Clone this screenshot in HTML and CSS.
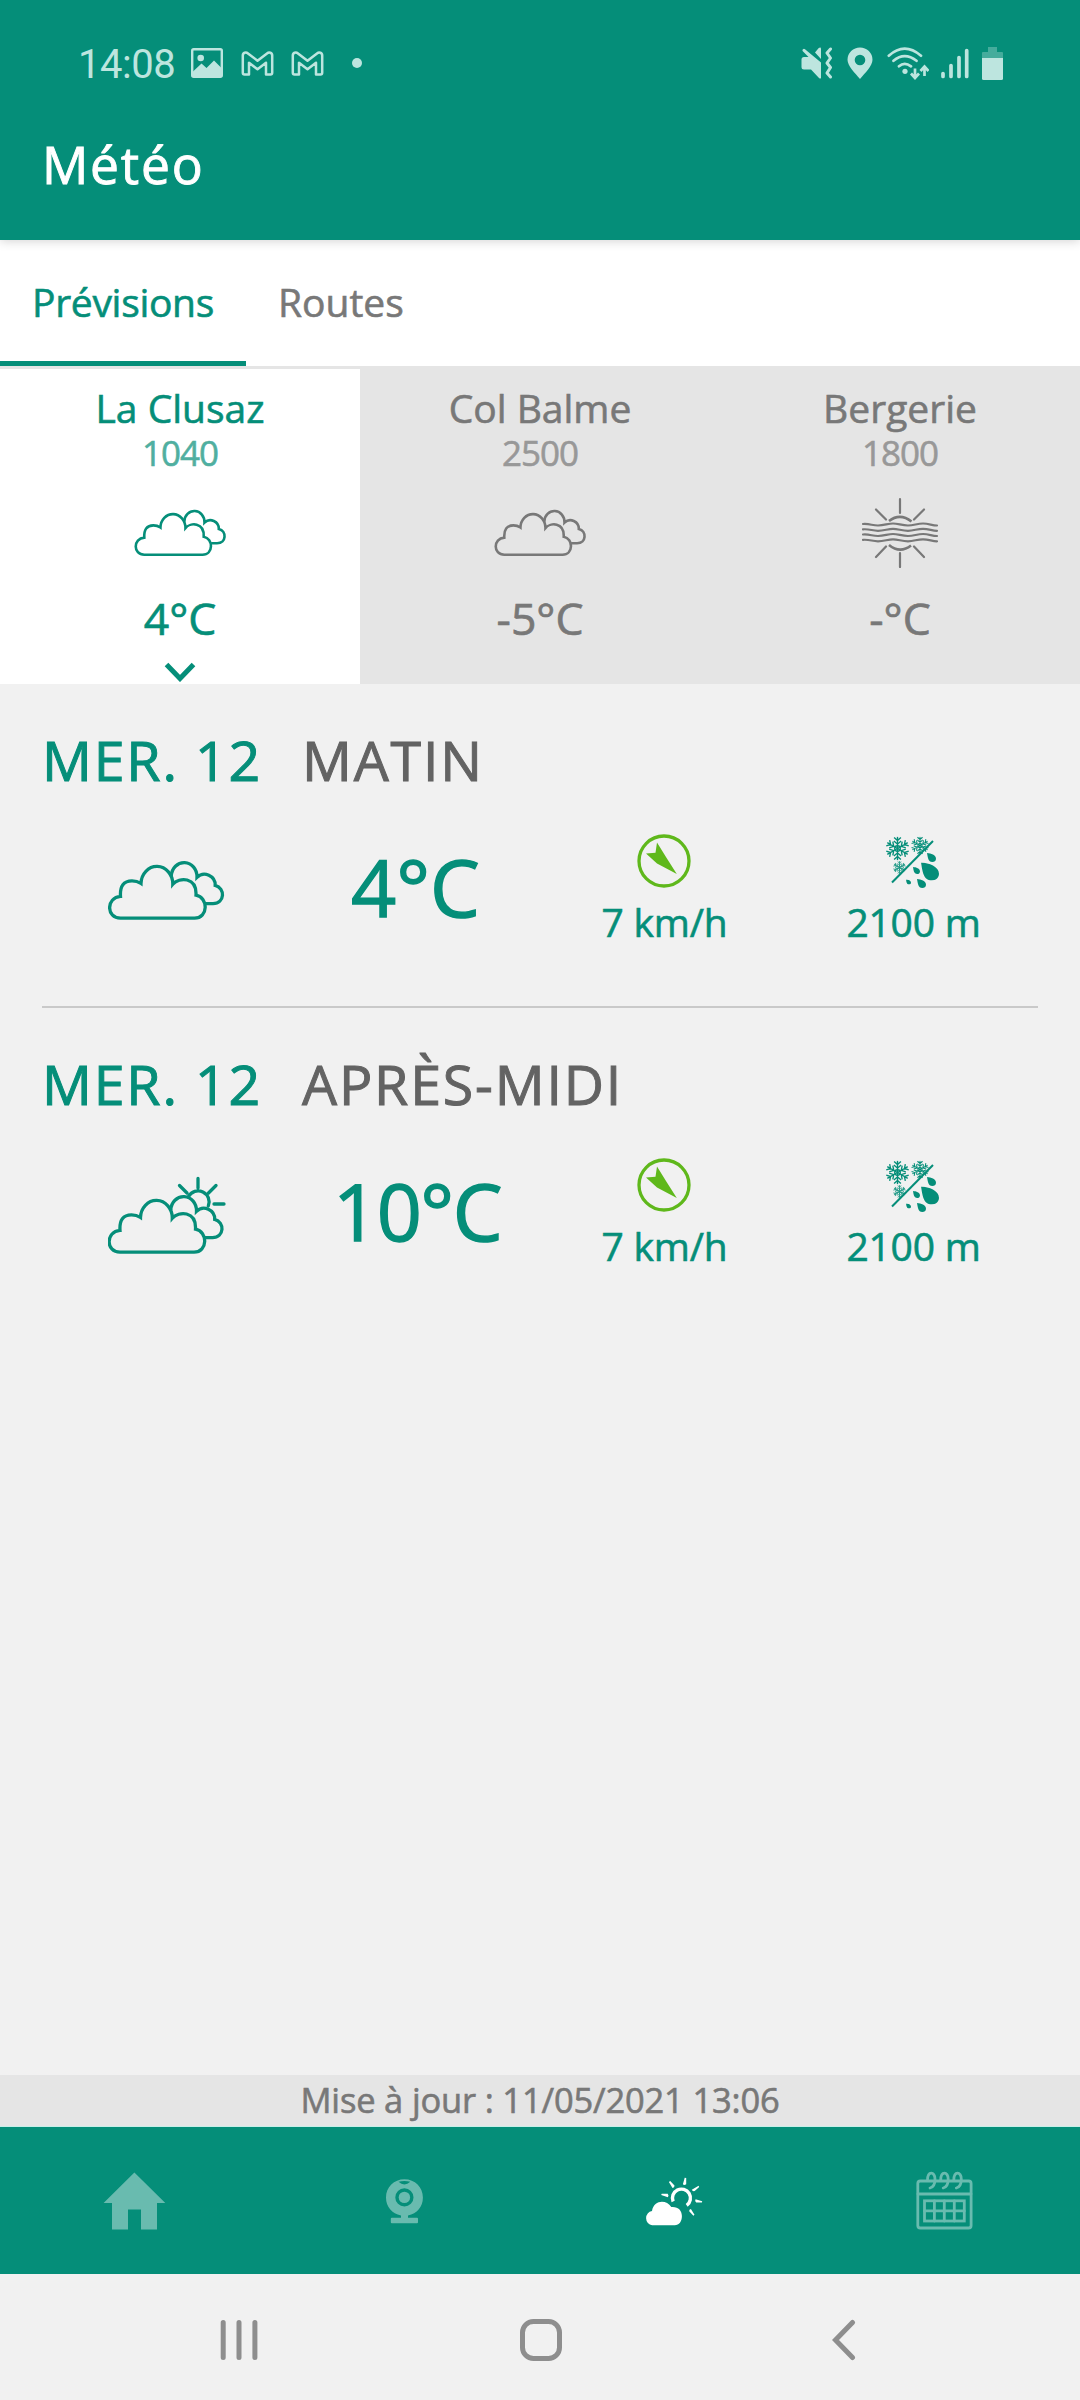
FILE: index.html
```html
<!DOCTYPE html>
<html lang="fr">
<head>
<meta charset="utf-8">
<title>Météo</title>
<link rel="stylesheet" href="styles.css">
</head>
<body>
<svg class="defs" width="0" height="0" aria-hidden="true">
  <symbol id="clouds" viewBox="0 0 117 61">
    <g fill="none" stroke="currentColor" stroke-width="3.3">
      <path d="M12.500 58.200C-2 58.200 -2 37.500 12.500 36.400Q11.500 20.800 24 20.800Q29 20.800 33 23.500A15.900 17.400 0 0 1 64.800 24.200C71 17 89 16.500 88 35.200C100.500 37.400 100.500 58.200 86.500 58.200Z"/>
      <path d="M63.300 16A12.850 14 0 0 1 89 17.200A10.800 10.800 0 0 1 107.200 25.400C117.500 28 117 43.600 105 43.600H97.500"/>
    </g>
  </symbol>
  <symbol id="flake" viewBox="-12 -12 24 24">
    <g fill="none" stroke="currentColor" stroke-width="1.350">
      <circle r="2.800"/>
      <g id="arm"><path d="M0 0V-11.800M-3.400 -11L0 -8L3.400 -11M-3.600 -7.500L0 -4.300L3.600 -7.500"/></g>
      <use href="#arm" transform="rotate(60)"/><use href="#arm" transform="rotate(120)"/><use href="#arm" transform="rotate(180)"/><use href="#arm" transform="rotate(240)"/><use href="#arm" transform="rotate(300)"/>
    </g>
  </symbol>
  <symbol id="drop" viewBox="0 0 18 18"><path fill="currentColor" d="M0 0C8 .5 18 4 18 11.300C18 15.500 14.500 18 10.800 18C2 18 1.500 8 0 0Z"/></symbol>
  <symbol id="rainsnow" viewBox="0 0 54 54">
    <use href="#flake" x="-.5" y="2.500" width="24" height="24"/>
    <use href="#flake" x="25" y="2.500" width="18" height="18"/>
    <use href="#flake" x="7" y="27" width="13" height="13"/>
    <path d="M6 48.500L47 7" stroke="currentColor" stroke-width="2"/>
    <use href="#drop" x="41" y="19" width="9" height="9"/>
    <use href="#drop" x="35" y="28.500" width="18" height="18"/>
    <use href="#drop" x="27" y="33" width="7" height="7"/>
    <use href="#drop" x="20" y="45.500" width="5" height="5"/>
    <use href="#drop" x="31" y="45" width="9" height="9"/>
  </symbol>
  <symbol id="wind" viewBox="0 0 54 54">
    <circle cx="27" cy="27" r="25" fill="none" stroke="currentColor" stroke-width="3.300"/>
    <path fill="currentColor" d="M9 19.500L18.500 18.800L20 8.500L29.300 23.500L39.800 40L20 29.500Z"/>
  </symbol>
  <symbol id="gmail" viewBox="0 0 33 25">
    <path fill="none" stroke="currentColor" stroke-width="2.500" stroke-linejoin="round" d="M3.500 23.500Q1.800 23.500 1.800 21.800V4.500C1.800 1.500 5 .8 7 2.400L16.500 9.700L26 2.400C28 .8 31.200 1.500 31.200 4.500V21.800Q31.200 23.500 29.500 23.500H25V11.800L16.500 18.200L8 11.800V23.500Z"/>
  </symbol>
</svg>

<div class="screen">
  <header class="header">
    <div class="status">
      <span class="clock">14:08</span>
      <svg class="st-image" viewBox="0 0 32 30" width="32" height="30"><rect x="1.200" y="1.200" width="29.600" height="27.600" rx="1.500" fill="none" stroke="currentColor" stroke-width="2.400"/><circle cx="9.700" cy="10" r="3.300" fill="currentColor"/><path fill="currentColor" d="M2 23.500L10.500 15.500L15.500 20L23 12.500L30.500 20V29H2Z"/></svg>
      <svg class="st-mail" width="33" height="25"><use href="#gmail"/></svg>
      <svg class="st-mail" width="33" height="25"><use href="#gmail"/></svg>
      <span class="st-dot"></span>
      <div class="status-right">
        <svg viewBox="0 0 32 32" width="32" height="32"><path fill="currentColor" d="M3 10H7.500L1.800 4.200Q1 3 2 2.200Q3 1.400 4 2.300L20 15.500V31Q19.500 32 18 31L10 22.500H3Q.5 22.500 .5 20V12.500Q.5 10 3 10ZM14 5.500L17.500 1.200Q20 -.5 20 2V12Z"/><path fill="none" stroke="currentColor" stroke-width="3" stroke-linecap="round" stroke-linejoin="round" d="M29.500 2L26 6L29.500 11L26 16L29.500 20.500L26 26L29.500 30"/></svg>
        <svg class="st-pin" viewBox="0 0 26 32" width="26" height="32"><path fill="currentColor" fill-rule="evenodd" d="M13 .5A12.500 12.300 0 0 1 25.500 12.800C25.500 19 18 26 13 32C8 26 .5 19 .5 12.800A12.500 12.300 0 0 1 13 .5ZM13 7.700A5.300 5.300 0 1 0 13 18.300A5.300 5.300 0 1 0 13 7.700Z"/></svg>
        <svg class="st-wifi" viewBox="0 0 42 33" width="42" height="33"><g fill="none" stroke="currentColor" stroke-width="2.700" stroke-linecap="round"><path d="M1.800 8.700Q17.500 -5.500 34 8.700M6.500 13.800Q17.500 4.500 29.500 13.800M12 19.300Q17.500 14.500 24 19.300"/></g><circle cx="18" cy="24.300" r="2.600" fill="currentColor"/><path fill="none" stroke="currentColor" stroke-width="2.700" d="M28 21.500V31M24 26.500L28 31L32 26.500M37.500 29V20M33.500 24L37.500 19.500L41.500 24"/></svg>
        <svg class="st-signal" viewBox="0 0 28 31" width="28" height="31"><path stroke="currentColor" stroke-width="3.700" stroke-linecap="round" d="M2 25.500V28.500M10 17.500V28.500M18 9.500V28.500M25.700 2.500V28.500"/></svg>
        <svg class="st-battery" viewBox="0 0 21 33" width="21" height="33"><path opacity=".35" fill="currentColor" d="M6 0H15V5H20Q21 5 21 6V11H0V6Q0 5 1 5H6Z"/><path fill="currentColor" d="M0 11H21V31.500Q21 33 19.500 33H1.500Q0 33 0 31.500Z"/></svg>
      </div>
    </div>
    <h1 class="title">Météo</h1>
  </header>

  <nav class="tabs">
    <a class="tab tab-active">Prévisions</a>
    <a class="tab">Routes</a>
  </nav>

  <section class="places">
    <article class="place place-active">
      <h2 class="place-name">La Clusaz</h2>
      <p class="place-alt">1040</p>
      <div class="place-icon"><svg width="93" height="48"><use href="#clouds"/></svg></div>
      <p class="place-temp">4°C</p>
      <svg class="chevron" viewBox="0 0 32 20" width="32" height="20"><path d="M2.500 2.500L16 16.500L29.500 2.500" fill="none" stroke="currentColor" stroke-width="5"/></svg>
    </article>
    <article class="place">
      <h2 class="place-name">Col Balme</h2>
      <p class="place-alt">2500</p>
      <div class="place-icon"><svg width="93" height="48"><use href="#clouds"/></svg></div>
      <p class="place-temp">-5°C</p>
    </article>
    <article class="place">
      <h2 class="place-name">Bergerie</h2>
      <p class="place-alt">1800</p>
      <div class="place-icon"><svg viewBox="0 0 78 70" width="78" height="70"><g fill="none" stroke="currentColor" stroke-width="2.200" stroke-linecap="round"><path d="M39 1.200V15M39 55V69M15 11.500L25 21.500M63 11.500L53 21.500M15 59L25 48.500M63 59L53 48.500"/><path d="M28 23Q39 14.500 50.500 23.500M28 47Q39 56 50 47.500" stroke-width="2.600" stroke-linecap="butt"/><path id="wave" d="M2 26C9 25.500 11 27.500 17 27.500S27 25.500 32 25.500S41 27.500 47 27.500S56 25.500 62 25.500S71 27.500 76 27.500"/><use href="#wave" y="5.300"/><use href="#wave" y="10.500"/><use href="#wave" y="15.800"/></g></svg></div>
      <p class="place-temp">-°C</p>
    </article>
  </section>

  <main class="forecast">
    <section class="slot">
      <h3 class="slot-title"><span class="slot-date">MER. 12</span><span class="slot-part">MATIN</span></h3>
      <div class="slot-row">
        <svg width="117" height="61"><use href="#clouds"/></svg>
        <p class="slot-temp">4°C</p>
        <div class="stat"><svg class="wind" width="54" height="54"><use href="#wind"/></svg><span>7 km/h</span></div>
        <div class="stat"><svg width="54" height="54"><use href="#rainsnow"/></svg><span>2100 m</span></div>
      </div>
    </section>
    <section class="slot">
      <h3 class="slot-title"><span class="slot-date">MER. 12</span><span class="slot-part">APRÈS-MIDI</span></h3>
      <div class="slot-row">
        <svg viewBox="0 0 118 80" width="118" height="80"><use href="#clouds" x="-.5" y="19" width="117" height="61"/><path d="M80.500 21.500A11 11 0 0 1 100.300 31M90 3.500V13M71.500 10.500L79 18M108 10.500L100.500 18M106 29H116" fill="none" stroke="currentColor" stroke-width="3.300" stroke-linecap="round"/></svg>
        <p class="slot-temp slot-temp-wide">10°C</p>
        <div class="stat"><svg class="wind" width="54" height="54"><use href="#wind"/></svg><span>7 km/h</span></div>
        <div class="stat"><svg width="54" height="54"><use href="#rainsnow"/></svg><span>2100 m</span></div>
      </div>
    </section>
  </main>

  <p class="updated">Mise à jour : 11/05/2021 13:06</p>

  <nav class="appnav">
    <a><svg viewBox="0 0 72 72" width="72" height="72"><path fill="currentColor" d="M35.400 7.500L66.300 38H58V64.500H42V44.500H29V64.500H13V38H4.600Z"/></svg></a>
    <a><svg viewBox="0 0 72 72" width="72" height="72"><path fill="currentColor" fill-rule="evenodd" d="M35.400 14.200C46 14.200 53.900 22 53.900 32.500C53.900 42 48 48.500 39 50.500V52.700H48Q49 52.700 49 53.700V57.300Q49 58.300 48 58.300H22.800Q21.800 58.300 21.800 57.300V53.700Q21.800 52.700 22.800 52.700H32V50.500C23 48.500 17 42 17 32.500C17 22 25 14.200 35.400 14.200ZM29.500 16.800Q35.400 22 41.300 16.800Q35.400 15 29.500 16.800ZM35.400 23.300A9.100 9.100 0 1 0 35.400 41.500A9.100 9.100 0 1 0 35.400 23.300Z"/><circle cx="35.400" cy="32.400" r="5.700" fill="currentColor"/></svg></a>
    <a class="current"><svg viewBox="0.800 0 72 72" width="72" height="72"><path fill="currentColor" d="M14 60.300A7.200 7.200 0 0 1 13.800 46.100C15.500 35 28 34 33.100 42.100C40 41.500 43.700 45.500 43.700 51.100C43.700 56.500 41 60.300 36.500 60.300Z"/><path d="M34.900 36.500A9 9 0 1 1 48.500 40.400" fill="none" stroke="currentColor" stroke-width="3.400"/><path fill="currentColor" d="M46.500 12.700L48 13L48 19.300Q46 20.800 44.700 19.300ZM30.700 17L32 16L36.300 20.500Q36.500 22.700 34.300 23ZM60.400 20.800L61 22L56.500 26Q54.200 26.600 53.600 24.800ZM64 36.300L63.700 37.600H58Q56.200 36 57.400 34.200ZM56.300 49.700L55.200 50.700L51 46.200Q50.700 44.200 52.700 44ZM23 30L23.500 28.700H29.500Q31 30.400 29.700 32.200Z"/></svg></a>
    <a><svg viewBox="0 0 72 72" width="72" height="72"><g fill="none" stroke="currentColor" stroke-width="2.800" stroke-linecap="round"><rect x="8.800" y="16" width="53.300" height="47" rx="2.500"/><path d="M9 29H62M15.500 45.900H55.300M25.400 36V56M35.300 36V56M45.300 36V56"/><rect x="15.500" y="35.800" width="39.800" height="20.200"/><path d="M18.500 15.500C18.500 5.500 26 6.500 26 14Q26 22 21 23M31.700 15.500C31.700 5.500 39.200 6.500 39.200 14Q39.200 22 34.200 23M44.800 15.500C44.800 5.500 52.300 6.500 52.300 14Q52.300 22 47.300 23"/></g></svg></a>
  </nav>

  <nav class="sysnav">
    <svg viewBox="0 0 40 42" width="40" height="42"><path d="M4.200 3.500V38.500M20 3.500V38.500M35.900 3.500V38.500" stroke="currentColor" stroke-width="5" stroke-linecap="round"/></svg>
    <svg viewBox="0 0 42 42" width="42" height="42"><rect x="2.500" y="2.500" width="37" height="37" rx="11" fill="none" stroke="currentColor" stroke-width="5"/></svg>
    <svg viewBox="0 0 24 42" width="24" height="42"><path d="M20.500 3.500L3.500 21L20.500 38.500" fill="none" stroke="currentColor" stroke-width="5" stroke-linecap="round"/></svg>
  </nav>
</div>
</body>
</html>
```
FILE: styles.css
```css
* { box-sizing: border-box; }

body, h1, h2, h3, p { margin: 0; font-weight: 400; }

body {
  width: 1080px;
  background: #f1f1f1;
  color: #058e79;
  font-family: "Open Sans", "Noto Sans", sans-serif;
  -webkit-text-stroke: .6px currentColor;
}

svg { display: block; flex: none; }

.defs { position: absolute; }

.screen {
  display: flex;
  flex-direction: column;
  height: 2400px;
}

/* Header */
.header {
  flex: none;
  height: 240px;
  background: #058e79;
  color: #fff;
  box-shadow: 0 1px 10px rgba(0, 0, 0, .18);
  z-index: 1;
}

.status {
  display: flex;
  align-items: center;
  height: 126px;
  padding: 0 77px;
  color: #bde5df;
}

.clock {
  width: 114px;
  padding: 3px 0 0 1px;
  font: 40px/48px Roboto, sans-serif;
  letter-spacing: -.5px;
  -webkit-text-stroke: 0;
}

.st-image { margin-right: 18px; }
.st-mail { margin-right: 17px; }

.st-dot {
  width: 10px;
  height: 10px;
  margin-left: 11px;
  border-radius: 50%;
  background: currentColor;
}

.status-right {
  display: flex;
  align-items: center;
  margin-left: auto;
}

.st-pin { margin-left: 14px; }
.st-wifi { margin-left: 14px; }
.st-signal { margin-left: 12px; }
.st-battery { margin-left: 13px; }

.title {
  padding-left: 42px;
  font-size: 51.500px;
  line-height: 76px;
  letter-spacing: 1.800px;
  -webkit-text-stroke-width: .9px;
}

/* Tabs */
.tabs {
  display: flex;
  flex: none;
  height: 129px;
  background: #fff;
  border-bottom: 3px solid #e5e5e5;
}

.tab {
  padding: 35px 32px 0;
  border-bottom: 5px solid transparent;
  color: #787878;
  font-size: 39px;
  line-height: 54px;
}

.tab-active {
  width: 246px;
  letter-spacing: -.300px;
  color: #058e79;
  border-color: #058e79;
}

/* Places */
.places {
  display: grid;
  grid-template-columns: repeat(3, 1fr);
  flex: none;
  height: 315px;
}

.place {
  display: flex;
  flex-direction: column;
  align-items: center;
  padding-top: 17px;
  background: #e5e5e5;
  color: #787878;
}

.place-active { background: #fff; color: #058e79; }

.place-name { font-size: 39px; line-height: 44px; }

.place-alt {
  padding-top: 1px;
  font-size: 35px;
  line-height: 44px;
  letter-spacing: -1px;
  opacity: .7;
}

.place-icon {
  display: flex;
  align-items: center;
  height: 70px;
  margin-top: 23px;
}

.place-temp {
  margin-top: 20px;
  font-size: 44.500px;
  line-height: 60px;
  -webkit-text-stroke-width: .7px;
}

.chevron { margin-top: 14px; }

/* Forecast */
.forecast { flex: 1; }

.slot {
  height: 324px;
  margin: 0 42px;
  padding-top: 46px;
}

.slot:first-child { border-bottom: 2px solid #c9c9c9; }

.slot-title {
  display: flex;
  height: 59px;
  font-size: 55.500px;
  line-height: 60px;
  letter-spacing: 1.800px;
  -webkit-text-stroke-width: 1px;
}

.slot-date { width: 260px; }
.slot-part { color: #636363; }

.slot-row {
  display: grid;
  grid-template-columns: repeat(4, 1fr);
  place-items: center;
  height: 203px;
}

.slot-temp {
  padding-bottom: 7px;
  font-size: 79px;
  line-height: 90px;
  -webkit-text-stroke-width: 1.4px;
}

.slot-temp-wide { padding-left: 3px; letter-spacing: -1.500px; }

.stat {
  display: flex;
  flex-direction: column;
  align-items: center;
  gap: 9px;
  font-size: 39px;
  line-height: 50px;
  letter-spacing: -.2px;
}

.wind { color: #5fb81b; }

/* Footer */
.updated {
  flex: none;
  height: 52px;
  background: #e5e5e5;
  border-bottom: 1px solid #c8eee8;
  color: #787878;
  font-size: 34.500px;
  line-height: 49px;
  letter-spacing: -.18px;
  text-align: center;
}

.appnav {
  display: grid;
  grid-template-columns: repeat(4, 1fr);
  place-items: center;
  flex: none;
  height: 147px;
  background: #058e79;
  color: #69bbaf;
}

.appnav .current { color: #fff; }

.sysnav {
  display: grid;
  grid-template-columns: 301px 312px 24px;
  align-items: center;
  flex: none;
  height: 126px;
  padding: 6px 0 0 219px;
  background: #f1f1f1;
  color: #8e8e8e;
}
```
